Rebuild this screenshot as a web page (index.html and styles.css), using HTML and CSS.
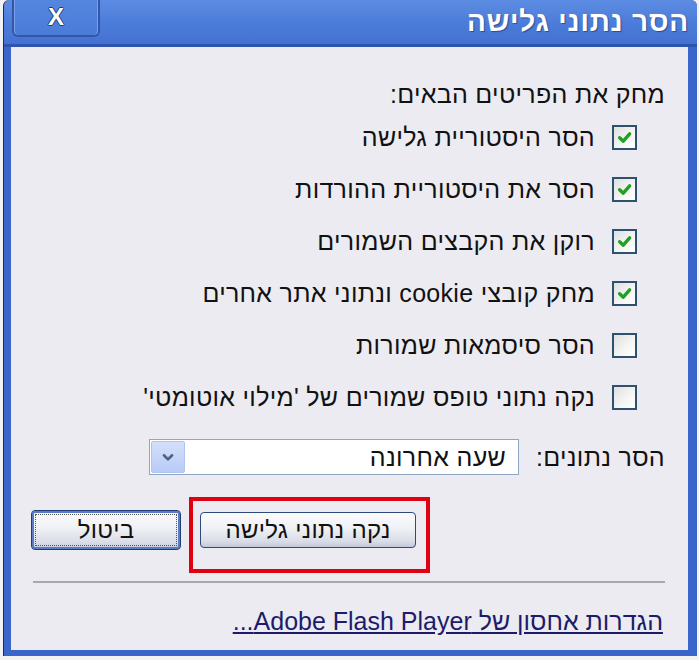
FILE: index.html
```html
<!DOCTYPE html>
<html lang="he">
<head>
<meta charset="utf-8">
<title>הסר נתוני גלישה</title>
<link rel="stylesheet" href="styles.css">
</head>
<body>
<div class="window" dir="rtl">
  <div class="titlebar">
    <span class="title">הסר נתוני גלישה</span>
    <span class="close">X</span>
  </div>
  <div class="content">
    <div class="intro">מחק את הפריטים הבאים:</div>
    <ul class="options">
      <li class="option"><span class="box checked"><svg viewBox="0 0 14 14" width="17" height="17"><path d="M3 7.2 L6 10 L11.2 4" fill="none" stroke="#21a121" stroke-width="2.8" stroke-linecap="round" stroke-linejoin="round"/></svg></span><span class="label">הסר היסטוריית גלישה</span></li>
      <li class="option"><span class="box checked"><svg viewBox="0 0 14 14" width="17" height="17"><path d="M3 7.2 L6 10 L11.2 4" fill="none" stroke="#21a121" stroke-width="2.8" stroke-linecap="round" stroke-linejoin="round"/></svg></span><span class="label">הסר את היסטוריית ההורדות</span></li>
      <li class="option"><span class="box checked"><svg viewBox="0 0 14 14" width="17" height="17"><path d="M3 7.2 L6 10 L11.2 4" fill="none" stroke="#21a121" stroke-width="2.8" stroke-linecap="round" stroke-linejoin="round"/></svg></span><span class="label">רוקן את הקבצים השמורים</span></li>
      <li class="option"><span class="box checked"><svg viewBox="0 0 14 14" width="17" height="17"><path d="M3 7.2 L6 10 L11.2 4" fill="none" stroke="#21a121" stroke-width="2.8" stroke-linecap="round" stroke-linejoin="round"/></svg></span><span class="label">מחק קובצי cookie ונתוני אתר אחרים</span></li>
      <li class="option"><span class="box"></span><span class="label">הסר סיסמאות שמורות</span></li>
      <li class="option"><span class="box"></span><span class="label">נקה נתוני טופס שמורים של 'מילוי אוטומטי'</span></li>
    </ul>
    <div class="range">
      <span class="range-label">הסר נתונים:</span>
      <div class="select">
        <span class="select-value">שעה אחרונה</span>
        <span class="select-btn"><svg viewBox="0 0 12 12" width="14" height="14"><path d="M2.5 4.5 L6 8 L9.5 4.5" fill="none" stroke="#4d6185" stroke-width="2.2" stroke-linecap="round" stroke-linejoin="round"/></svg></span>
      </div>
    </div>
    <div class="buttons">
      <div class="highlight">
        <span class="btn">נקה נתוני גלישה</span>
      </div>
      <span class="btn default"><span class="focus">ביטול</span></span>
    </div>
    <div class="separator"></div>
    <div class="link-row"><a class="link" href="#">הגדרות אחסון של Adobe Flash Player...</a></div>
  </div>
</div>
</body>
</html>
```
FILE: styles.css
```css
html, body {
  margin: 0;
  padding: 0;
  background: #f2f2f4;
}
body {
  font-family: "Liberation Sans", "DejaVu Sans", Arial, sans-serif;
  color: #111;
}
.window {
  margin-left: 3px;
  width: 694px;
  height: 656px;
  box-sizing: border-box;
  background: #3a66cc;
  border-radius: 6px 6px 0 0;
  padding: 0 9px 6px 7px;
  display: flex;
  flex-direction: column;
  border-left: 1px solid #2a2a3a;
}
.titlebar {
  height: 47px;
  margin: 0 -9px 0 -7px;
  box-sizing: border-box;
  background: linear-gradient(#5c8ce2, #4a7ad8 60%, #4572d2);
  border-bottom: 3px solid #2d55ae;
  border-radius: 6px 6px 0 0;
  display: flex;
  align-items: flex-start;
  padding: 0 8px 0 0;
}
.title {
  color: #fff;
  font-size: 28px;
  font-weight: bold;
  line-height: 44px;
  letter-spacing: 0.8px;
  text-shadow: 1px 1px 1px #2a4a96;
}
.close {
  margin-right: auto;
  margin-left: 8px;
  width: 88px;
  height: 37px;
  box-sizing: border-box;
  border: 2px solid #3456a8;
  border-top: none;
  border-radius: 0 0 6px 6px;
  background: linear-gradient(#5586de, #4a7bd8);
  box-shadow: inset 1px 0 0 #7aa0ea, inset -1px 0 0 #7aa0ea;
  color: #fff;
  font-size: 24px;
  font-weight: bold;
  text-align: center;
  line-height: 34px;
  text-shadow: -1px 0 #1c3a80, 1px 0 #1c3a80, 0 1px #1c3a80, 0 -1px #1c3a80;
}
.content {
  flex: 1;
  background: #ecebf1;
  padding: 33px 23px 0 20px;
  display: flex;
  flex-direction: column;
}
.intro {
  font-size: 25px;
  line-height: 28px;
  letter-spacing: 0.3px;
}
.options {
  list-style: none;
  margin: 3px 0 0 0;
  padding: 0 28px 0 0;
}
.option {
  height: 52px;
  display: flex;
  align-items: center;
  gap: 17px;
  font-size: 25px;
  letter-spacing: 0.3px;
}
.box {
  width: 25px;
  height: 25px;
  box-sizing: border-box;
  border: 2px solid #2c5270;
  background: linear-gradient(135deg, #dedfe0, #f6f6f4 60%, #ffffff);
  display: flex;
  align-items: center;
  justify-content: center;
  flex-shrink: 0;
}
.box svg {
  display: block;
}
.range {
  margin-top: 16px;
  display: flex;
  align-items: center;
  gap: 17px;
  font-size: 25px;
  letter-spacing: 0.3px;
}
.select {
  width: 370px;
  height: 36px;
  box-sizing: border-box;
  border: 1px solid #8fa6c4;
  background: #fff;
  display: flex;
  align-items: center;
  padding: 1px;
}
.select-value {
  flex: 1;
  padding-right: 11px;
  line-height: 32px;
}
.select-btn {
  width: 34px;
  height: 32px;
  box-sizing: border-box;
  border: 1px solid #b0c4ee;
  border-radius: 2px;
  background: linear-gradient(#d4e0fc, #b8cbf6);
  display: flex;
  align-items: center;
  justify-content: center;
}
.buttons {
  margin-top: 22px;
  display: flex;
  justify-content: flex-end;
  align-items: flex-start;
  gap: 8px;
}
.highlight {
  width: 241px;
  height: 76px;
  box-sizing: border-box;
  border: 4px solid #e00010;
  padding: 11px 10px 0 10px;
}
.btn {
  display: flex;
  align-items: center;
  justify-content: center;
  box-sizing: border-box;
  height: 36px;
  width: 216px;
  border: 1px solid #2c4a7c;
  border-radius: 4px;
  background: linear-gradient(#fbfbfd, #f0f1f5 45%, #d8dbe6 85%, #c4c9d8);
  font-size: 24px;
  letter-spacing: 0.3px;
}
.btn.default {
  width: 150px;
  height: 40px;
  margin-top: 13px;
  border: 1px solid #1f3c74;
  box-shadow: inset 0 0 0 2px #5a7cc8;
  padding: 3px;
}
.focus {
  flex: 1;
  align-self: stretch;
  display: flex;
  align-items: center;
  justify-content: center;
  border: 1px dotted #555;
}
.separator {
  margin-top: 8px;
  margin-left: 2px;
  height: 0;
  border-top: 2px solid #a8a8b0;
}
.link-row {
  margin-top: 24px;
  padding-right: 2px;
}
.link {
  font-size: 25px;
  line-height: 28px;
  color: #1c1c6a;
  text-decoration: underline;
}
```
